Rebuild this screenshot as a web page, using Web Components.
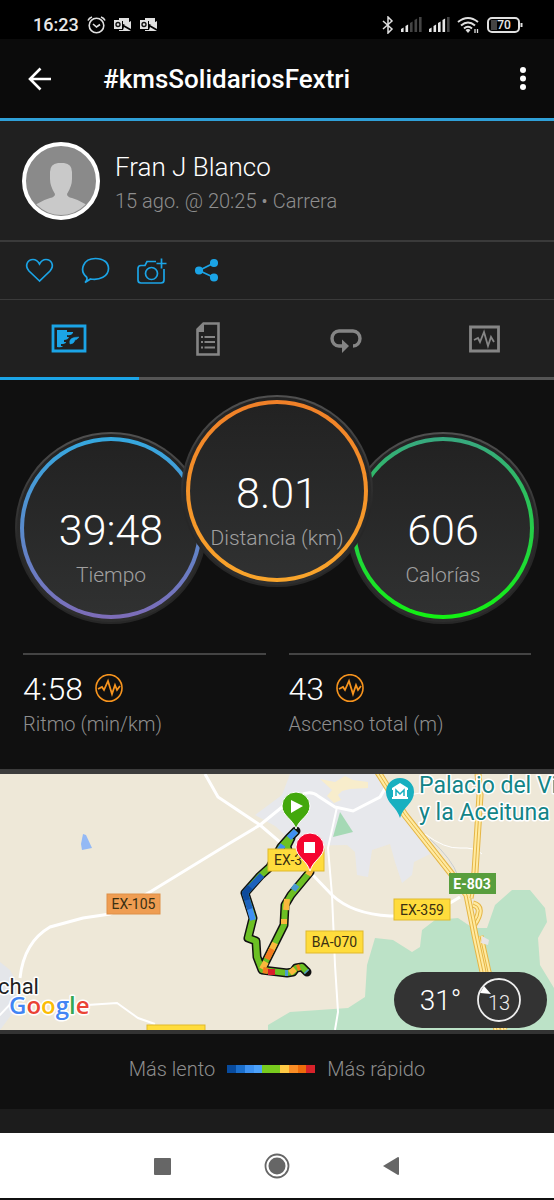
<!DOCTYPE html>
<html lang="es">
<head>
<meta charset="utf-8">
<meta name="viewport" content="width=device-width, initial-scale=1">
<title>#kmsSolidariosFextri</title>
<style>
  :root {
    --color-accent: #1ba4e6;
    --color-line: #3a3a3a;
    --color-muted: #8e8e8e;
    --color-panel: #202020;
    --color-page: #101010;
  }
  body {
    margin: 0;
    background: var(--color-page);
    color: #fff;
    font-family: Roboto, "Liberation Sans", sans-serif;
    font-weight: 300;
  }
  .rings {
    display: flex;
    justify-content: center;
    padding: 15px 0 29px;
  }
  .stats {
    display: grid;
    grid-template-columns: 1fr 1fr;
    gap: 23px;
    padding: 0 23px;
    height: 116px;
  }
</style>
</head>
<body>
<status-bar></status-bar>
<app-header>#kmsSolidariosFextri</app-header>
<main>
  <athlete-card>
    <span slot="name">Fran J Blanco</span>
    <span slot="info">15 ago. @ 20:25 • Carrera</span>
  </athlete-card>
  <activity-actions></activity-actions>
  <view-tabs></view-tabs>
  <section class="rings">
    <metric-ring value="39:48" from="#35a9e0" to="#7d6cb8">Tiempo</metric-ring>
    <metric-ring class="front" value="8.01" from="#f08028" to="#f9a52b">Distancia (km)</metric-ring>
    <metric-ring value="606" from="#38a880" to="#12f212">Calorías</metric-ring>
  </section>
  <section class="stats">
    <stat-item value="4:58">Ritmo (min/km)</stat-item>
    <stat-item value="43">Ascenso total (m)</stat-item>
  </section>
  <route-map></route-map>
  <pace-legend></pace-legend>
</main>
<nav-bar></nav-bar>

<script>
class BaseComponent extends HTMLElement {
  css = () => "";
  html = () => "";

  constructor() {
    super();
    this.attachShadow({ mode: "open" });
  }

  connectedCallback() {
    this.shadowRoot.innerHTML = `<style>
      * { box-sizing: border-box; }
      button { padding: 0; border: 0; background: none; color: inherit; font: inherit; cursor: pointer; }
      svg { display: block; }
      ${this.css()}
    </style>${this.html()}`;
  }
}

class StatusBar extends BaseComponent {
  css = () => /*css*/ `
    :host {
      display: flex;
      align-items: center;
      justify-content: space-between;
      height: 39px;
      padding: 10px 31px 0 33px;
      box-sizing: border-box;
      background: #000;
      color: #e8e8e8;
      font-size: 18px;
      font-weight: 500;
      line-height: 20px;
    }
    div { display: flex; align-items: center; gap: 8px; }
    .right { gap: 7px; }
  `;

  mail = () => /*html*/ `
    <svg width="18" height="14" viewBox="0 0 18 14">
      <path d="M5 0h10v5l-3 2-3-1V3H5z" fill="#e0e0e0"/>
      <path d="M10 7l7-4v8z" fill="#e0e0e0"/>
      <path d="M5 12h4l1-3 7 4H5z" fill="#e0e0e0"/>
      <path d="M0 2h8v9H0z" fill="#e0e0e0"/>
      <circle cx="4" cy="6.5" r="2" fill="none" stroke="#111" stroke-width="1.4"/>
    </svg>
  `;

  // bars past "on" are dimmed
  signal = (on) => /*html*/ `
    <svg width="21" height="15" viewBox="0 0 21 15" fill="#e8e8e8">
      ${[0, 1, 2, 3, 4].map((i) => `<path d="M${i * 4.5} ${12 - i * 3}l2.6-1.6V15H${i * 4.5}z" ${i < on ? "" : 'fill="#444"'}/>`).join("")}
    </svg>
  `;

  html = () => /*html*/ `
    <div>
      <span>16:23</span>
      <svg width="19" height="18" viewBox="0 0 19 18" fill="none" stroke="#e0e0e0" stroke-width="1.6">
        <circle cx="9.5" cy="9.5" r="7.3"/>
        <path d="M1 4.5Q2 2 5 1M14 1q3 1 4 3.5M6 8l3.5 3 3.5-2.5"/>
      </svg>
      ${this.mail()}${this.mail()}
    </div>
    <div class="right">
      <svg width="12" height="18" viewBox="0 0 12 18" fill="none" stroke="#e0e0e0" stroke-width="1.5">
        <path d="M1 5l9 8-4 4V1l4 4-9 8"/>
      </svg>
      ${this.signal(2)}${this.signal(4)}
      <svg width="23" height="18" viewBox="0 0 23 18" fill="none" stroke="#e0e0e0" stroke-width="2">
        <path d="M1 6q10-8 20 0M4 9.5q7-6 14 0M7 12.5q4-3.5 8 0"/>
        <path d="M8.5 14q2.500-2 5 0L11 17z" fill="#e0e0e0" stroke="none"/>
        <path d="M18 13v4M20.500 13v4" stroke-width="1.3"/>
      </svg>
      <svg width="36" height="16" viewBox="0 0 36 16">
        <rect x="1" y="1" width="31" height="14" rx="4" fill="none" stroke="#e0e0e0" stroke-width="2"/>
        <path d="M4 3h6v10H4z" fill="#444"/>
        <path d="M33.500 6h2v4h-2z" fill="#e0e0e0"/>
        <text x="17" y="12" text-anchor="middle" font-size="12" fill="#e8e8e8">70</text>
      </svg>
    </div>
  `;
}

class AppHeader extends BaseComponent {
  css = () => /*css*/ `
    :host {
      display: flex;
      align-items: center;
      height: 82px;
      padding: 0 21px 0 28px;
      box-sizing: border-box;
      border-bottom: 3px solid #2fa0d8;
      background: #0b0b0b;
    }
    h1 {
      flex: 1;
      margin: 0 0 0 51px;
      font-size: 26px;
      line-height: 32px;
      font-weight: 500;
    }
  `;

  html = () => /*html*/ `
    <button aria-label="Volver">
      <svg width="24" height="24" viewBox="0 0 24 24" fill="none" stroke="#fff" stroke-width="2.6">
        <path d="M12.5 1.5L2 12l10.5 10.5M2 12h21"/>
      </svg>
    </button>
    <h1><slot></slot></h1>
    <button aria-label="Más opciones">
      <svg width="24" height="24" viewBox="0 0 24 24" fill="#fff">
        <circle cx="14" cy="3" r="3"/><circle cx="14" cy="11.500" r="3"/><circle cx="14" cy="20" r="3"/>
      </svg>
    </button>
  `;
}

class AthleteCard extends BaseComponent {
  css = () => /*css*/ `
    :host {
      display: flex;
      align-items: center;
      gap: 15px;
      height: 121px;
      padding: 0 22px;
      box-sizing: border-box;
      border-bottom: 2px solid var(--color-line);
      background: var(--color-panel);
    }
    .text { display: grid; gap: 6px; padding-top: 2px; }
    .name { font-size: 26px; line-height: 32px; }
    .info { font-size: 20px; line-height: 24px; color: var(--color-muted); }
  `;

  html = () => /*html*/ `
    <svg width="78" height="78" viewBox="0 0 78 78">
      <clipPath id="face"><circle cx="39" cy="39" r="34"/></clipPath>
      <circle cx="39" cy="39" r="37" fill="#8a8a8a" stroke="#fff" stroke-width="4"/>
      <g clip-path="url(#face)" fill="#c9c9c9">
        <path d="M36 21h6q8 1 8 9v7q0 7-5 15 0 3 5 4 14 4 21 14v8H7v-8q7-10 21-14 5-1 5-4-5-8-5-15v-7q0-8 8-9z"/>
      </g>
    </svg>
    <div class="text">
      <div class="name"><slot name="name"></slot></div>
      <div class="info"><slot name="info"></slot></div>
    </div>
  `;
}

class ActivityActions extends BaseComponent {
  css = () => /*css*/ `
    :host {
      display: flex;
      align-items: center;
      gap: 25px;
      height: 58px;
      padding: 0 24px;
      box-sizing: border-box;
      border-bottom: 1px solid var(--color-line);
      background: var(--color-panel);
      color: var(--color-accent);
    }
    svg { fill: none; stroke: currentColor; stroke-width: 1.7; }
    .solid { fill: currentColor; }
  `;

  html = () => /*html*/ `
    <button aria-label="Me gusta">
      <svg width="31" height="30" viewBox="0 0 31 30">
        <path d="M15.5 25L5 15C0 9 4 3.500 9 3.500q4 0 6.500 4.500Q18 3.500 22 3.500c5 0 9 5.500 4 11.500z"/>
      </svg>
    </button>
    <button aria-label="Comentar">
      <svg width="31" height="30" viewBox="0 0 31 30">
        <path d="M6.5 21C-1 14.500 3 2.500 15.500 2.500c8 0 13 4 13 10 0 8-9 12-18 10.500L5 26.500q3-3 1.500-5.500z"/>
      </svg>
    </button>
    <button aria-label="Añadir foto">
      <svg width="31" height="30" viewBox="0 0 31 30">
        <path d="M20 5.500h-9l-2 4H5q-3 0-3 3V24q0 3 3 3h20q3 0 3-3V13M25.500 2.500v10M20.500 7.500h10"/>
        <circle cx="15.500" cy="17.500" r="6"/>
      </svg>
    </button>
    <button aria-label="Compartir">
      <svg class="solid" width="31" height="30" viewBox="0 0 31 30">
        <path d="M22 7L7 14.500l15 7" fill="none"/>
        <circle cx="22" cy="7" r="3.200"/><circle cx="7" cy="14.500" r="3.200"/><circle cx="22" cy="21.500" r="3.200"/>
      </svg>
    </button>
  `;
}

class ViewTabs extends BaseComponent {
  css = () => /*css*/ `
    :host {
      display: grid;
      grid-template-columns: repeat(4, 1fr);
      height: 80px;
      background: var(--color-panel);
      color: #858585;
    }
    button {
      display: grid;
      place-items: center;
      border-bottom: 3px solid #555;
    }
    button[aria-selected="true"] {
      border-color: var(--color-accent);
      color: var(--color-accent);
    }
    svg { fill: none; stroke: currentColor; }
  `;

  html = () => /*html*/ `
    <button role="tab" aria-selected="true" aria-label="Mapa">
      <svg width="36" height="34" viewBox="0 0 36 34">
        <path d="M2 4h32v25H2z" stroke-width="2.800"/>
        <path d="M6 8h10v2h6v1q-2 3-6 2v2h2q-1 3-5 3v2h2q0 2-5 2v2h2q-1 2-6 1z" fill="currentColor" stroke="none"/>
        <path d="M28 15q-2 3-4 3-1 4-5 4-2-7 9-7z" fill="currentColor" stroke="currentColor" stroke-width="0.500"/>
      </svg>
    </button>
    <button role="tab" aria-selected="false" aria-label="Estadísticas">
      <svg width="24" height="34" viewBox="0 0 24 34">
        <path d="M1.500 7.500l6-6h15v31h-21z" stroke-width="2.600"/>
        <path d="M1 9l7-8v9H1z" fill="currentColor" stroke="none"/>
        <path d="M5 15h2m1.500 0H19M5 20h2m1.500 0H19M5 25.500h2m1.500 0H19" stroke-width="2.200"/>
      </svg>
    </button>
    <button role="tab" aria-selected="false" aria-label="Vueltas">
      <svg width="34" height="30" viewBox="0 0 34 30">
        <path d="M16 22h-6a7 7.500 0 0 1 0-15h14a7 7.500 0 0 1 0 15" stroke-width="3.400"/>
        <path d="M13 15.500l7 6.500-7 7z" fill="currentColor" stroke="none"/>
      </svg>
    </button>
    <button role="tab" aria-selected="false" aria-label="Gráficos">
      <svg width="31" height="34" viewBox="0 0 31 34">
        <path d="M1.500 5h28v24h-28z" stroke-width="2.800"/>
        <path d="M5 18l4-2 2 4 4-10 4 14 3-9 3 5" stroke-width="1.800"/>
      </svg>
    </button>
  `;
}

class MetricRing extends BaseComponent {
  css = () => /*css*/ `
    :host {
      display: block;
      width: 192px;
      height: 192px;
      margin-top: 37px;
      padding: 2px;
      box-sizing: border-box;
      border-radius: 50%;
      background: linear-gradient(#505050, #272727 60%);
    }
    :host(.front) {
      z-index: 1;
      margin: 0 -26px 37px;
    }
    .rim {
      height: 100%;
      padding: 3px;
      border-radius: 50%;
      background: linear-gradient(#232323, #2e2e2e);
    }
    .ring {
      height: 100%;
      padding: 4px;
      border-radius: 50%;
      background: linear-gradient(${this.getAttribute("from")}, ${this.getAttribute("to")});
    }
    .face {
      height: 100%;
      padding-top: 63px;
      border-radius: 50%;
      background: linear-gradient(#222, #303131);
      text-align: center;
      white-space: nowrap;
    }
    .value { font-size: 43px; line-height: 52px; }
    .label {
      display: flex;
      justify-content: center;
      margin-top: 6px;
      font-size: 21px;
      line-height: 26px;
      color: #a0a0a0;
    }
  `;

  html = () => /*html*/ `
    <div class="rim"><div class="ring"><div class="face">
      <div class="value">${this.getAttribute("value")}</div>
      <div class="label"><slot></slot></div>
    </div></div></div>
  `;
}

class StatItem extends BaseComponent {
  css = () => /*css*/ `
    :host {
      display: block;
      border-top: 2px solid #444;
    }
    .row {
      display: flex;
      align-items: center;
      gap: 12px;
      margin-top: 14px;
      font-size: 32px;
      line-height: 40px;
    }
    .label { margin-top: 2px; font-size: 20px; line-height: 26px; color: var(--color-muted); }
  `;

  html = () => /*html*/ `
    <div class="row">
      <span>${this.getAttribute("value")}</span>
      <svg width="28" height="30" viewBox="0 0 28 30" fill="none" stroke="#f7941e">
        <ellipse cx="14" cy="14" rx="13" ry="13.300" stroke-width="1.600"/>
        <path d="M3 15l4-2 2 3 4-9 4 13 3-9 2 5 3-4" stroke-width="1.800"/>
      </svg>
    </div>
    <div class="label"><slot></slot></div>
  `;
}

class RouteMap extends BaseComponent {
  // coloured stretches of the run, in the order they are painted
  stretches = [
    ["#6cc024", "M296 57L289 64L281 73L270 93L260 102L245 119L253 144L248 164L256 167L257 183L262 196L287 199L293 198L296 194L302 193L307 198M263 193L282 155L284 151L285 131L291 121L310 98M291 64L287 72L289 80"],
    ["#3f8ff2", "M296 57L289 64M283 71L279 77M249 132L253 146"],
    ["#1c62bd", "M262 101L245 119L250 135"],
    ["#0e4a9c", "M250 113L245 119L247 126"],
    ["#4a9ad0", "M297 111L293 116M285 199L288 199M306 197L307 198"],
    ["#fbb83c", "M311 96L308 101M287 125L286 136M284 145L284 150M275 169L271 177M266 188L262 195M290 199L295 195"],
    ["#f57a1e", "M272 175L267 185M263 196L268 197M297 194L300 193"],
    ["#d81e2c", "M268 198L275 198"],
  ];

  css = () => /*css*/ `
    :host {
      display: block;
      position: relative;
      height: 265px;
      box-sizing: border-box;
      border-top: 5px solid #3c3c3c;
      border-bottom: 4px solid #333;
      overflow: hidden;
    }
    .map { width: 100%; height: 100%; }
    .map text { font-weight: 400; }
    .map .bold { font-weight: 700; }
    .map .logo { font-family: "Open Sans", sans-serif; font-weight: 600; }
    .roads { fill: none; stroke: #fff; stroke-width: 2; }
    .halo { paint-order: stroke; stroke: #fff; stroke-width: 3; stroke-linejoin: round; }
    .weather {
      display: flex;
      align-items: center;
      justify-content: center;
      gap: 16px;
      position: absolute;
      right: 7px;
      bottom: 2px;
      width: 153px;
      height: 56px;
      border-radius: 28px;
      background: #333;
      font-size: 28px;
    }
    .wind { width: 44px; height: 44px; }
  `;

  badge = (x, y, w, h, text, fill = "#ffdc3c", edge = "#e0b92c") => /*html*/ `
    <rect x="${x}" y="${y}" width="${w}" height="${h}" fill="${fill}" stroke="${edge}"/>
    <text x="${x + w / 2}" y="${y + h / 2 + 5}" text-anchor="middle" font-size="14" fill="#3a3012">${text}</text>
  `;

  highway = (d) => `
    <path d="${d}" fill="none" stroke="#e5b545" stroke-width="7"/>
    <path d="${d}" fill="none" stroke="#ffeaa0" stroke-width="5"/>
    <path d="${d}" fill="none" stroke="#e5b545" stroke-width="1"/>
  `;

  html = () => /*html*/ `
    <svg class="map" viewBox="0 0 554 256" preserveAspectRatio="xMidYMid slice">
      <path d="M-400 0H954V256H-400z" fill="#eee8d8"/>
      <path d="M290 0L282 21L255 41L275 52L297 72L347 71L355 78L357 101L368 103L372 76L390 70L395 88L402 109L412 101L414 88L430 80L404 41L380 0z" fill="#e7e8ec"/>
      <path d="M0 188L10 196L18 211L12 240L0 256z" fill="#e4e6ea"/>
      <path d="M320 5l15 3 10-6 8 4 15 2v6l-18 1-8 2-4 4 3 5-7 3-7-7 5-6z" fill="#f8edcc"/>
      <path d="M340 38L353 58L333 63z" fill="#a5d9b5"/>
      <path d="M268 256V251L290 238L348 234L365 223L367 191L375 164L393 166L412 178L420 173L422 156L435 146L458 144L473 154L487 154L495 131L512 116H530L545 134L547 148L538 164L540 191L554 214V256z" fill="#bce2c7"/>
      <path d="M83 60l3 1 6 13-10 2-1-6z" fill="#94b9f5"/>
      <g class="roads">
        <path d="M205 0L218 23L260 51L287 74L332 121Q352 140 390 142Q430 143 460 123" stroke-width="3"/>
        <path d="M20 204Q24 168 50 153L83 144L110 140L150 118L230 69L260 51L287 29Q308 13 318 22L335 33L353 37L380 23L387 11" stroke-width="3"/>
        <path d="M337 33L328 74L332 121L335 191L338 238L335 256M-2 243L18 222"/>
        <path d="M87 231L117 229L138 244L155 250"/>
        <path d="M425 60Q445 75 460 74T482 80M387 25L420 19" stroke-width="1"/>
        <path d="M430 65Q452 85 458 102" stroke="#c8ccd0" stroke-width="1"/>
      </g>
      ${this.highway("M480 162L488 198L504 256M473 130Q485 133 474 150")}
      ${this.highway("M478 0L480 21L475 98L470 124M376 -5L405 41L450 98L467 121L475 161L483 198L497 256")}
      <path d="M482 162l7 4-1 5-7-2z" fill="#e8e4e4"/>
      ${this.badge(107, 120, 53, 20, "EX-105", "#ef9d52", "#dd8f48")}
      ${this.badge(306, 157, 57, 22, "BA-070")}
      ${this.badge(394, 125, 56, 21, "EX-359")}
      ${this.badge(147, 251, 58, 20, "")}
      <rect x="449" y="99" width="47" height="21" fill="#589e3d"/>
      <text class="bold" x="472" y="115" text-anchor="middle" font-size="14" fill="#fff">E-803</text>
      <g fill="none" stroke-linejoin="round">
        <path d="${this.stretches[0][1]}" stroke="#111" stroke-width="9" stroke-linecap="round"/>
        ${this.stretches.map(([color, d]) => `<path d="${d}" stroke="${color}" stroke-width="6"/>`).join("")}
      </g>
      ${this.badge(268, 75, 56, 22, "")}
      <text x="274" y="91" font-size="14" fill="#3a3012">EX-3</text>
      <path d="M296 55C293 45 282 42 282 32a14 14 0 0 1 28 0C310 42 299 45 296 55z" fill="#43a80c" stroke="#fff"/>
      <path d="M291 26l12 6-12 7z" fill="#fff"/>
      <path d="M310 97C307 86 296 83 296 73a14 14 0 0 1 28 0C324 83 313 86 310 97z" fill="#f5052f" stroke="#fff"/>
      <path d="M304 68h11v11h-11z" fill="#fff"/>
      <path d="M400 44C397 33 386 29 386 18a14 14 0 0 1 28 0C414 29 403 33 400 44z" fill="#18b0c0"/>
      <path d="M392 14l8-5 8 5v2h-1v7h1v2h-16v-2h1v-7h-1z" fill="#fff"/>
      <path d="M396 22v-6l4 4 4-4v6" fill="none" stroke="#18b0c0" stroke-width="1.500"/>
      <g class="halo" font-size="23" fill="#138487">
        <text x="419" y="19">Palacio del Vino</text>
        <text x="419" y="46">y la Aceituna</text>
      </g>
      <text class="halo" x="-2" y="220" font-size="22" fill="#222">chal</text>
      <text class="halo logo" x="9" y="240" font-size="24"><tspan fill="#4285f4">G</tspan><tspan fill="#ea4335">o</tspan><tspan fill="#fbbc05">o</tspan><tspan fill="#4285f4">g</tspan><tspan fill="#34a853">l</tspan><tspan fill="#ea4335">e</tspan></text>
    </svg>
    <div class="weather">
      <span>31°</span>
      <svg class="wind" viewBox="0 0 44 44">
        <circle cx="22" cy="22" r="21" fill="none" stroke="#eee" stroke-width="1.800"/>
        <path d="M3 15L7 8L14 16z" fill="#fff"/>
        <text x="22" y="32" text-anchor="middle" font-size="20" fill="#eee">13</text>
      </svg>
    </div>
  `;
}

class PaceLegend extends BaseComponent {
  colors = ["#084b9e", "#1b6fcd", "#3d92f2", "#4da2fb", "#78cb1e", "#78cb1e", "#ffca45", "#fa8d25", "#ee6c0b", "#d8222a"];

  css = () => /*css*/ `
    :host {
      display: flex;
      align-items: center;
      justify-content: center;
      gap: 12px;
      height: 99px;
      padding-bottom: 6px;
      box-sizing: border-box;
      border-bottom: 24px solid #1c1c1c;
      font-size: 20px;
      line-height: 26px;
      color: var(--color-muted);
    }
    .scale {
      display: grid;
      grid-template-columns: repeat(10, 1fr);
      width: 88px;
      height: 8px;
    }
  `;

  html = () => /*html*/ `
    <span>Más lento</span>
    <div class="scale">${this.colors.map((c) => `<i style="background: ${c}"></i>`).join("")}</div>
    <span>Más rápido</span>
  `;
}

class NavBar extends BaseComponent {
  css = () => /*css*/ `
    :host {
      display: flex;
      align-items: center;
      justify-content: center;
      gap: 88px;
      height: 65px;
      margin-bottom: 2px;
      background: #fff;
      color: #666;
    }
    svg { fill: currentColor; }
  `;

  html = () => /*html*/ `
    <button aria-label="Recientes"><svg width="26" height="26" viewBox="0 0 26 26"><rect x="4" y="5" width="17" height="17" rx="1"/></svg></button>
    <button aria-label="Inicio">
      <svg width="26" height="26" viewBox="0 0 26 26">
        <circle cx="13" cy="13" r="11.500" fill="none" stroke="currentColor" stroke-width="1.800"/>
        <circle cx="13" cy="13" r="8.500"/>
      </svg>
    </button>
    <button aria-label="Atrás"><svg width="26" height="26" viewBox="0 0 26 26"><path d="M5 13L20 4q1 0 1 1v16q0 1-1 1z"/></svg></button>
  `;
}

customElements.define("status-bar", StatusBar);
customElements.define("app-header", AppHeader);
customElements.define("athlete-card", AthleteCard);
customElements.define("activity-actions", ActivityActions);
customElements.define("view-tabs", ViewTabs);
customElements.define("metric-ring", MetricRing);
customElements.define("stat-item", StatItem);
customElements.define("route-map", RouteMap);
customElements.define("pace-legend", PaceLegend);
customElements.define("nav-bar", NavBar);
</script>
</body>
</html>
